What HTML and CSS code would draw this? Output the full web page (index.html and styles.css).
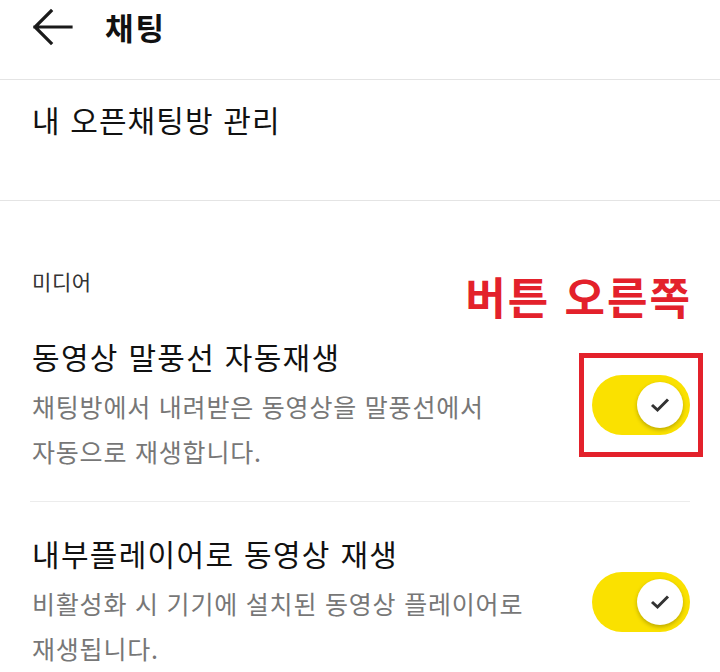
FILE: index.html
```html
<!DOCTYPE html>
<html lang="ko">
<head>
  <meta charset="UTF-8" />
  <meta name="viewport" content="width=device-width, initial-scale=1.0"/>
  <title>채팅</title>
  <link rel="stylesheet" href="styles.css">
</head>
<body>
  <header class="topbar">
    <svg class="back" width="40" height="40" viewBox="0 0 40 40">
      <path d="M2 20 H38 M18 4 L2 20 L18 36" fill="none" stroke="#1a1a1a" stroke-width="3.2" stroke-linecap="square" stroke-linejoin="miter"/>
    </svg>
    <h1>채팅</h1>
  </header>

  <div class="menu-item">내 오픈채팅방 관리</div>

  <!-- Media section -->
  <section class="section">
    <div class="section-head">
      <span class="label">미디어</span>
      <span class="note">버튼 오른쪽</span>
    </div>

    <div class="setting">
      <div class="texts">
        <div class="title">동영상 말풍선 자동재생</div>
        <div class="desc">채팅방에서 내려받은 동영상을 말풍선에서<br>자동으로 재생합니다.</div>
      </div>
      <div class="toggle-wrap">
        <div class="toggle on">
          <span class="knob">
            <svg width="22" height="18" viewBox="0 0 22 18"><path d="M3 9 L8.5 14 L19 3.5" fill="none" stroke="#333" stroke-width="3"/></svg>
          </span>
        </div>
        <div class="highlight"></div>
      </div>
    </div>

    <div class="divider"></div>

    <div class="setting second">
      <div class="texts">
        <div class="title">내부플레이어로 동영상 재생</div>
        <div class="desc">비활성화 시 기기에 설치된 동영상 플레이어로<br>재생됩니다.</div>
      </div>
      <div class="toggle-wrap">
        <div class="toggle on">
          <span class="knob">
            <svg width="22" height="18" viewBox="0 0 22 18"><path d="M3 9 L8.5 14 L19 3.5" fill="none" stroke="#333" stroke-width="3"/></svg>
          </span>
        </div>
      </div>
    </div>
  </section>
</body>
</html>
```

FILE: styles.css
```css
body {
  font-family: "Noto Sans CJK KR", "Noto Sans", sans-serif;
  background: #fff;
  color: #111;
  margin: 0;
  padding: 0;
  overflow: hidden;
}
.topbar {
  height: 80px;
  box-sizing: border-box;
  border-bottom: 1px solid #e4e4e4;
  display: flex;
  align-items: center;
  padding: 0 0 26px 33px;
}
.back {
  display: block;
}
.topbar h1 {
  margin: 0 0 0 32px;
  font-size: 31px;
  line-height: 40px;
  font-weight: 700;
  letter-spacing: 2px;
  color: #111;
}
.menu-item {
  height: 121px;
  box-sizing: border-box;
  padding: 19px 32px 0;
  font-size: 30px;
  line-height: 40px;
  letter-spacing: 1.1px;
  border-bottom: 1px solid #e4e4e4;
}
.section {
  padding-top: 65px;
}
.section-head {
  display: flex;
  justify-content: space-between;
  align-items: flex-start;
  padding: 0 30px 0 32px;
}
.label {
  font-size: 21px;
  line-height: 30px;
  letter-spacing: 0.6px;
  color: #333;
}
.note {
  margin: 5px -2px 0 0;
  font-size: 44px;
  line-height: 50px;
  font-weight: 700;
  letter-spacing: 2px;
  color: #e3212b;
}
.setting {
  display: flex;
  align-items: center;
  justify-content: space-between;
  padding: 15px 30px 27px 32px;
}
.setting.second {
  padding-top: 31px;
}
.title {
  font-size: 30px;
  line-height: 40px;
  letter-spacing: 1.3px;
  color: #111;
}
.desc {
  margin-top: 8px;
  font-size: 25px;
  line-height: 45px;
  letter-spacing: 0.8px;
  color: #777;
}
.toggle-wrap {
  position: relative;
}
.toggle {
  width: 98px;
  height: 60px;
  border-radius: 30px;
  background: #fae100;
  display: flex;
  align-items: center;
  justify-content: flex-end;
  padding-right: 7px;
  box-sizing: border-box;
}
.knob {
  width: 46px;
  height: 46px;
  border-radius: 50%;
  background: #fff;
  box-shadow: 0 2px 4px rgba(0,0,0,0.25);
  display: flex;
  align-items: center;
  justify-content: center;
}
.knob svg {
  display: block;
}
.highlight {
  position: absolute;
  top: -22px;
  bottom: -22px;
  left: -13px;
  right: -13px;
  border: 5px solid #e3212b;
}
.divider {
  height: 1px;
  background: #ececec;
  margin: 0 30px;
}
```
